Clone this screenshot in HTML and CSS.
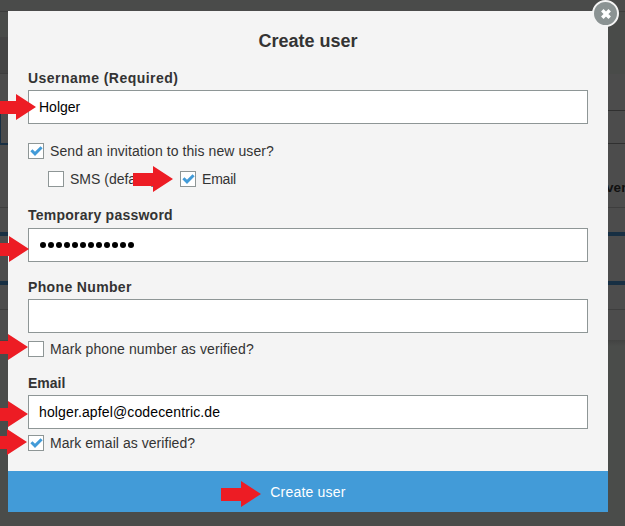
FILE: index.html
```
<!DOCTYPE html>
<html lang="en">
<head>
<meta charset="utf-8">
<title>Create user</title>
<link rel="stylesheet" href="styles.css">
</head>
<body>
<svg class="defs" width="0" height="0">
  <symbol id="arrow" viewBox="0 0 40 26"><path d="M0 7H20V0L40 13L20 26V20H0Z" fill="#ed1c24"/></symbol>
  <symbol id="check" viewBox="0 0 16 16"><path d="M3.4 7.2L7 10.8L13.6 4.2" fill="none" stroke="#429bd8" stroke-width="3"/></symbol>
</svg>
<div class="backdrop">
  <div class="band top"></div>
  <div class="band header"><div class="side"></div></div>
  <div class="band toolbar"><div class="tab"></div><div class="field"></div></div>
  <div class="band columns"><span class="column-name">ver</span></div>
  <div class="band gap"></div>
  <div class="band row"></div>
  <div class="band thin"></div>
  <div class="band last"></div>
</div>
<main class="modal">
  <button class="close" aria-label="Close"><svg viewBox="0 0 12 12" width="12" height="12"><path d="M2.3 2.3L9.7 9.7M9.7 2.3L2.3 9.7" stroke="#fff" stroke-width="3.5"/></svg></button>
  <h1>Create user</h1>
  <form class="form">
    <label class="label username">Username (Required)</label>
    <div class="input">Holger</div>
    <div class="option invite"><i class="box"><svg><use href="#check"/></svg></i><span>Send an invitation to this new user?</span></div>
    <div class="methods">
      <div class="option sms"><i class="box"></i><span>SMS (default)</span></div>
      <div class="option method-email"><i class="box"><svg><use href="#check"/></svg></i><span>Email</span></div>
    </div>
    <label class="label temporary">Temporary password</label>
    <div class="input password"><i></i><i></i><i></i><i></i><i></i><i></i><i></i><i></i><i></i><i></i><i></i><i></i></div>
    <label class="label phone">Phone Number</label>
    <div class="input"></div>
    <div class="option verify"><i class="box"></i><span>Mark phone number as verified?</span></div>
    <label class="label email">Email</label>
    <div class="input address">holger.apfel@codecentric.de</div>
    <div class="option verify-email"><i class="box"><svg><use href="#check"/></svg></i><span>Mark email as verified?</span></div>
  </form>
  <button class="submit">Create user</button>
</main>
<svg class="arrow a1"><use href="#arrow"/></svg>
<svg class="arrow a2"><use href="#arrow"/></svg>
<svg class="arrow a3"><use href="#arrow"/></svg>
<svg class="arrow a4"><use href="#arrow"/></svg>
<svg class="arrow a5"><use href="#arrow"/></svg>
<svg class="arrow a6"><use href="#arrow"/></svg>
<svg class="arrow a7"><use href="#arrow"/></svg>
</body>
</html>
```
FILE: styles.css
```
* { box-sizing: border-box; }
body {
  margin: 0;
  width: 625px;
  height: 526px;
  position: relative;
  overflow: hidden;
  background: #4a4c4a;
  color: #333;
  font: 14px/20px "Liberation Sans", Arial, sans-serif;
}
.defs { position: absolute; }

.backdrop { position: absolute; inset: 0; display: flex; flex-direction: column; background: #4c4c4c; }
.top { height: 12px; background: #4a4b4a; border-bottom: 1px solid #3c3d3c; }
.header { height: 62px; background: #494b49; padding-top: 25px; }
.side { width: 8px; height: 37px; background: #444; border-bottom: 1px solid #3e3e3e; }
.toolbar { height: 71px; display: flex; justify-content: space-between; align-items: flex-end; }
.tab { width: 30px; height: 37px; border: solid #182f43; border-width: 0 0 2px 1px; }
.field { width: 30px; height: 34px; margin-bottom: 1px; border: solid #303030; border-width: 1px 0; }
.columns { height: 63px; display: flex; justify-content: flex-end; padding-top: 33px; border-bottom: 1px solid #3e3e3e; }
.column-name { width: 19px; white-space: nowrap; color: #111; font-weight: bold; height: 20px; letter-spacing: .1px; font-size: 13.5px; }
.gap { height: 28px; border-bottom: 4px solid #172f43; }
.row { height: 49px; border-bottom: 4px solid #172f43; }
.thin { height: 25px; border-bottom: 1px solid #3e3e3e; }
.last { flex: 1; margin-top: 30px; background: linear-gradient(#424342, #4a4c4a 6px); }

.modal {
  position: relative;
  display: flex;
  flex-direction: column;
  width: 600px;
  height: 501px;
  margin: 11px 0 0 8px;
  background: #f4f4f4;
}
h1 { margin: 18px 0 0; height: 24px; text-align: center; font-size: 18px; line-height: 24px; }
.form { flex: 1; margin: 15px 20px 0; }
.label { display: block; height: 22px; font-weight: bold; font-size: 14px; line-height: 20px; letter-spacing: .35px; }
.username { letter-spacing: .46px; }
.temporary { height: 23px; letter-spacing: .24px; }
.phone { margin-top: 15px; }
.email { margin-top: 16px; letter-spacing: 0; }
.input {
  height: 34px;
  padding: 0 10px;
  border: 1px solid #8e9696;
  background: #fff;
  color: #000;
  line-height: 32px;
}
.address { letter-spacing: .13px; }
.password { display: flex; align-items: center; gap: 1.5px; padding-left: 10.8px; }
.password i { width: 6.5px; height: 6.5px; border-radius: 50%; background: #000; }
.option { display: flex; align-items: center; gap: 6px; height: 16px; line-height: 16px; white-space: nowrap; }
.box { width: 16px; height: 16px; border: 1px solid #8e9696; background: #fff; }
.box svg { display: block; width: 16px; height: 16px; margin: -1px; }
.invite { margin-top: 19px; letter-spacing: .08px; }
.methods { display: flex; margin: 12px 0 18px 20px; }
.sms { width: 132px; }
.method-email { letter-spacing: -.2px; }
.verify { margin-top: 8px; letter-spacing: .1px; }
.verify-email { margin-top: 6px; letter-spacing: .05px; }
.submit { height: 41px; border: 0; padding: 0; background: #429bd8; color: #fff; font: inherit; letter-spacing: .2px; text-align: center; }

.close {
  position: absolute;
  top: -11px;
  right: -11px;
  display: grid;
  place-items: center;
  width: 27px;
  height: 27px;
  padding: 0;
  border: 2px solid #f4f4f4;
  border-radius: 50%;
  background: #8b9393;
}
.arrow { position: absolute; width: 40px; height: 26px; }
.a1 { left: -4px; top: 94px; }
.a2 { left: 133px; top: 166px; }
.a3 { left: -11px; top: 236px; }
.a4 { left: -12px; top: 334px; }
.a5 { left: -12px; top: 401px; }
.a6 { left: -13px; top: 429px; }
.a7 { left: 221px; top: 481px; }
```
